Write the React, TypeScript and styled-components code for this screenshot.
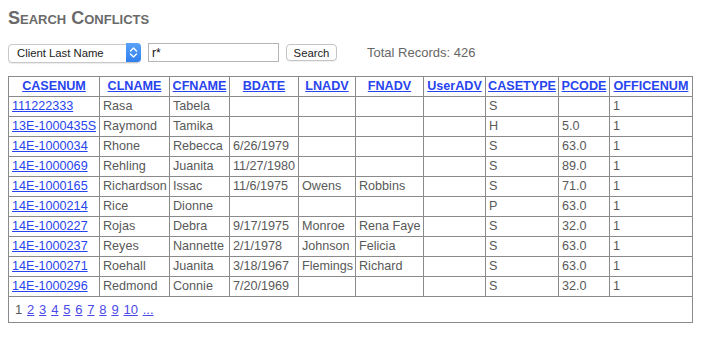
import React from "react";
import styled, { createGlobalStyle } from "styled-components";

const GlobalStyle = createGlobalStyle`
  body {
    margin: 8px;
    background: #ffffff;
    font-family: "Liberation Sans", Arial, sans-serif;
    color: #595959;
  }
`;

const Page = styled.div`
  display: flex;
  flex-direction: column;
  align-items: flex-start;
`;

const Title = styled.h2`
  margin: 0;
  font-size: 18px;
  line-height: 21px;
  font-weight: bold;
  font-variant: small-caps;
  color: #6a6a6a;
`;

const Controls = styled.div`
  display: flex;
  align-items: center;
  margin-top: 14px;
  height: 19px;
`;

const SelectWrap = styled.span`
  position: relative;
  display: inline-block;
  width: 133px;
  height: 19px;
`;

const Select = styled.select`
  appearance: none;
  -webkit-appearance: none;
  width: 100%;
  height: 100%;
  margin: 0;
  padding: 0 0 0 8px;
  border: 1px solid #c8c8c8;
  border-radius: 4px;
  background: #fff;
  font-family: "Liberation Sans", Arial, sans-serif;
  font-size: 11.3px;
  color: #222;
  box-shadow: 0 1px 1px rgba(0, 0, 0, 0.08);
`;

const SelectArrow = styled.span`
  position: absolute;
  top: 0;
  right: 0;
  width: 15px;
  height: 19px;
  border-radius: 0 4px 4px 0;
  background: linear-gradient(#5aa2f8, #2f7ff0);
  display: flex;
  align-items: center;
  justify-content: center;
  pointer-events: none;
`;

const TextInput = styled.input`
  margin: 0 0 0 7px;
  width: 131px;
  height: 19px;
  box-sizing: border-box;
  padding: 0 3px;
  border: 1px solid #b5b5b5;
  font-family: "Liberation Sans", Arial, sans-serif;
  font-size: 12px;
  color: #111;
`;

const Button = styled.button`
  margin-left: 7px;
  width: 51px;
  height: 17px;
  box-sizing: border-box;
  padding: 0;
  border: 1px solid #c4c4c4;
  border-radius: 4px;
  background: #fff;
  font-family: "Liberation Sans", Arial, sans-serif;
  font-size: 11.3px;
  color: #222;
  box-shadow: 0 1px 1px rgba(0, 0, 0, 0.06);
`;

const Total = styled.span`
  margin-left: 30px;
  font-size: 13px;
  color: #666;
`;

const Table = styled.table`
  margin-top: 14px;
  border-collapse: collapse;
  table-layout: fixed;
  width: 684px;
  border: 1px solid #8a8a8a;
  font-size: 12.6px;
`;

const Th = styled.th`
  border: 1px solid #8a8a8a;
  padding: 2px 1px;
  height: 15px;
  line-height: 15px;
  text-align: center;
  font-weight: bold;
  white-space: nowrap;
  overflow: visible;
`;

const Td = styled.td`
  border: 1px solid #8a8a8a;
  padding: 2px 1px 2px 3px;
  height: 15px;
  line-height: 15px;
  color: #595959;
  white-space: nowrap;
  overflow: visible;
`;

const Link = styled.a`
  color: #2844ee;
  text-decoration: underline;
`;

const PagerCell = styled.td`
  padding: 4px 6px 4px 6px;
  height: 17px;
  line-height: 17px;
  font-size: 13px;
  color: #595959;
  word-spacing: 1.2px;
`;

const PageLink = styled.a`
  color: #4a4ae8;
  text-decoration: underline;
`;

const widths = [91, 70, 60, 69, 57, 68, 62, 73, 51, 83];
const headers = [
  "CASENUM",
  "CLNAME",
  "CFNAME",
  "BDATE",
  "LNADV",
  "FNADV",
  "UserADV",
  "CASETYPE",
  "PCODE",
  "OFFICENUM",
];

const rows: string[][] = [
  ["111222333", "Rasa", "Tabela", "", "", "", "", "S", "", "1"],
  ["13E-1000435S", "Raymond", "Tamika", "", "", "", "", "H", "5.0", "1"],
  ["14E-1000034", "Rhone", "Rebecca", "6/26/1979", "", "", "", "S", "63.0", "1"],
  ["14E-1000069", "Rehling", "Juanita", "11/27/1980", "", "", "", "S", "89.0", "1"],
  ["14E-1000165", "Richardson", "Issac", "11/6/1975", "Owens", "Robbins", "", "S", "71.0", "1"],
  ["14E-1000214", "Rice", "Dionne", "", "", "", "", "P", "63.0", "1"],
  ["14E-1000227", "Rojas", "Debra", "9/17/1975", "Monroe", "Rena Faye", "", "S", "32.0", "1"],
  ["14E-1000237", "Reyes", "Nannette", "2/1/1978", "Johnson", "Felicia", "", "S", "63.0", "1"],
  ["14E-1000271", "Roehall", "Juanita", "3/18/1967", "Flemings", "Richard", "", "S", "63.0", "1"],
  ["14E-1000296", "Redmond", "Connie", "7/20/1969", "", "", "", "S", "32.0", "1"],
];

const pages = ["2", "3", "4", "5", "6", "7", "8", "9", "10", "..."];

export default function App() {
  return (
    <>
      <GlobalStyle />
      <Page>
        <Title>Search Conflicts</Title>
        <Controls>
          <SelectWrap>
            <Select defaultValue="cl">
              <option value="cl">Client Last Name</option>
              <option value="cf">Client First Name</option>
              <option value="cn">Case Number</option>
            </Select>
            <SelectArrow>
              <svg width="9" height="13" viewBox="0 0 9 13" fill="none">
                <path d="M1.5 5 L4.5 2 L7.5 5" stroke="#fff" strokeWidth="1.4" strokeLinecap="round" strokeLinejoin="round" />
                <path d="M1.5 8 L4.5 11 L7.5 8" stroke="#fff" strokeWidth="1.4" strokeLinecap="round" strokeLinejoin="round" />
              </svg>
            </SelectArrow>
          </SelectWrap>
          <TextInput defaultValue="r*" />
          <Button>Search</Button>
          <Total>Total Records: 426</Total>
        </Controls>
        <Table>
          <colgroup>
            {widths.map((w, i) => (
              <col key={i} style={{ width: w }} />
            ))}
          </colgroup>
          <thead>
            <tr>
              {headers.map((h) => (
                <Th key={h}>
                  <Link href="#">{h}</Link>
                </Th>
              ))}
            </tr>
          </thead>
          <tbody>
            {rows.map((r) => (
              <tr key={r[0]}>
                {r.map((c, i) => (
                  <Td key={i}>{i === 0 ? <Link href="#">{c}</Link> : c}</Td>
                ))}
              </tr>
            ))}
            <tr>
              <PagerCell colSpan={10}>
                1{" "}
                {pages.map((p, i) => (
                  <React.Fragment key={p}>
                    <PageLink href="#">{p}</PageLink>
                    {i < pages.length - 1 ? " " : ""}
                  </React.Fragment>
                ))}
              </PagerCell>
            </tr>
          </tbody>
        </Table>
      </Page>
    </>
  );
}
